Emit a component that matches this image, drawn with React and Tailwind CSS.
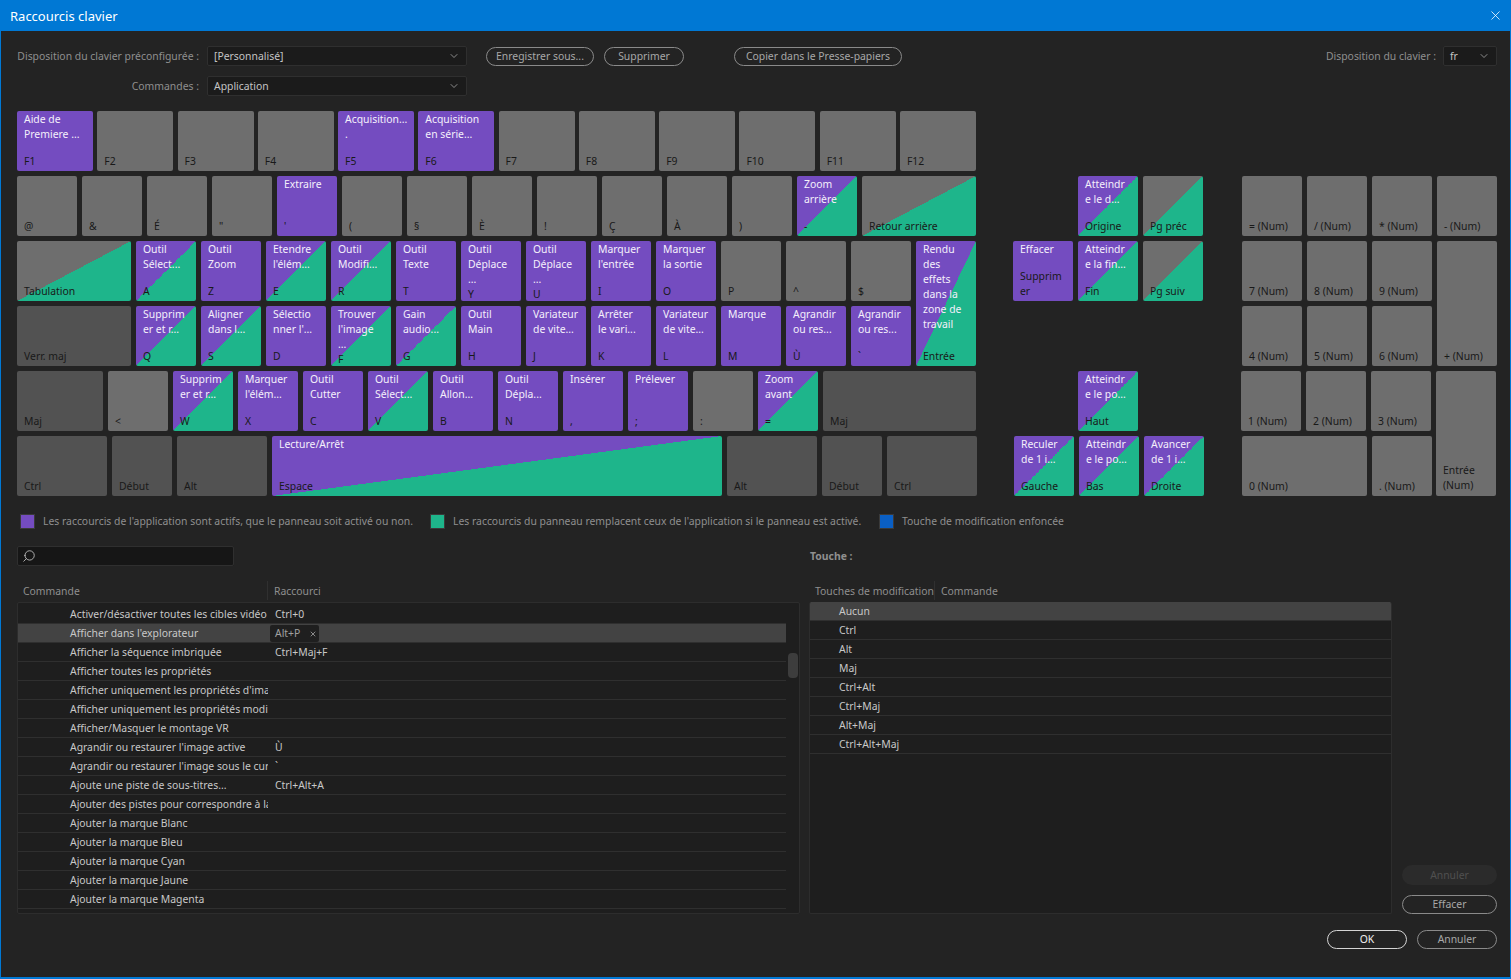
import React from 'react';
import { ChevronDown, Search, X } from 'lucide-react';

const PURPLE = 'bg-[#744cc0]';
const MIX = 'bg-[linear-gradient(to_bottom_right,#744cc0_50%,#1eb58b_50%)]';
const GRAY = 'bg-[#6e6e6e]';
const GRAYMIX = 'bg-[linear-gradient(to_bottom_right,#6e6e6e_50%,#1eb58b_50%)]';
const DARK = 'bg-[#525252]';

const Key = ({ top, label, color = GRAY, className = 'w-[60px] h-[60px]', labelClass = '' }) => (
  <div className={`${className} ${color} shrink-0 rounded-[2px] px-[7px] pt-px pb-[2px] flex flex-col justify-between overflow-hidden`}>
    <div className="text-[#f4f0fb] whitespace-pre-line">{top}</div>
    <div className={`${labelClass} text-[#191919] whitespace-pre-line`}>{label}</div>
  </div>
);

const Row = ({ children, className = 'gap-[5px]' }) => <div className={`flex ${className}`}>{children}</div>;

const Combo = ({ text, className }) => (
  <div className={`${className} h-5 bg-[#1b1b1b] border border-[#2f2f2f] rounded-[2px] pl-[6px] pr-[6px] flex items-center justify-between text-[#c4c4c4]`}>
    <span>{text}</span>
    <ChevronDown size={12} strokeWidth={1.5} className="text-[#b0b0b0]" />
  </div>
);

const Pill = ({ children, className, muted }) => (
  <div className={`${className} h-[19px] rounded-full border flex items-center justify-center ${muted ? 'border-[#8a8a8a] text-[#a8a8a8]' : 'border-[#d4d4d4] text-[#f0f0f0]'}`}>
    <span>{children}</span>
  </div>
);

const commands = [
  ['Activer/désactiver toutes les cibles vidéo', 'Ctrl+0'],
  ["Afficher dans l'explorateur", 'Alt+P'],
  ['Afficher la séquence imbriquée', 'Ctrl+Maj+F'],
  ['Afficher toutes les propriétés', ''],
  ["Afficher uniquement les propriétés d'image", ''],
  ['Afficher uniquement les propriétés modifiées', ''],
  ['Afficher/Masquer le montage VR', ''],
  ["Agrandir ou restaurer l'image active", 'Ù'],
  ["Agrandir ou restaurer l'image sous le curseur", '`'],
  ['Ajoute une piste de sous-titres...', 'Ctrl+Alt+A'],
  ['Ajouter des pistes pour correspondre à la source', ''],
  ['Ajouter la marque Blanc', ''],
  ['Ajouter la marque Bleu', ''],
  ['Ajouter la marque Cyan', ''],
  ['Ajouter la marque Jaune', ''],
  ['Ajouter la marque Magenta', ''],
  ['Ajouter la marque Orange', ''],
];

const modifiers = ['Aucun', 'Ctrl', 'Alt', 'Maj', 'Ctrl+Alt', 'Ctrl+Maj', 'Alt+Maj', 'Ctrl+Alt+Maj'];

const MainKeys = () => (
  <div className="w-[960px] shrink-0 flex flex-col gap-[5px]">
    <Row className="w-[959px] justify-between">
      <Key className="w-[76px] h-[60px]" color={PURPLE} top={'Aide de\nPremiere ...'} label="F1" />
      <Key className="w-[76px] h-[60px]" label="F2" />
      <Key className="w-[76px] h-[60px]" label="F3" />
      <Key className="w-[76px] h-[60px]" label="F4" />
      <Key className="w-[76px] h-[60px]" color={PURPLE} top={'Acquisition...\n.'} label="F5" />
      <Key className="w-[76px] h-[60px]" color={PURPLE} top={'Acquisition\nen série...'} label="F6" />
      <Key className="w-[76px] h-[60px]" label="F7" />
      <Key className="w-[76px] h-[60px]" label="F8" />
      <Key className="w-[76px] h-[60px]" label="F9" />
      <Key className="w-[76px] h-[60px]" label="F10" />
      <Key className="w-[76px] h-[60px]" label="F11" />
      <Key className="w-[76px] h-[60px]" label="F12" />
    </Row>
    <Row>
      <Key label="@" />
      <Key label="&" />
      <Key label="É" />
      <Key label={'"'} />
      <Key color={PURPLE} top="Extraire" label="'" />
      <Key label="(" />
      <Key label="§" />
      <Key label="È" />
      <Key label="!" />
      <Key label="Ç" />
      <Key label="À" />
      <Key label=")" />
      <Key color={MIX} top={'Zoom\narrière'} label="-" />
      <Key className="w-[114px] h-[60px]" color={GRAYMIX} label="Retour arrière" />
    </Row>
    <Row>
      <div className="flex flex-col gap-[5px]">
        <Row>
          <Key className="w-[114px] h-[60px]" color={GRAYMIX} label="Tabulation" />
          <Key color={MIX} top={'Outil\nSélect...'} label="A" />
          <Key color={PURPLE} top={'Outil\nZoom'} label="Z" />
          <Key color={MIX} top={"Etendre\nl'élém..."} label="E" />
          <Key color={MIX} top={'Outil\nModifi...'} label="R" />
          <Key color={PURPLE} top={'Outil\nTexte'} label="T" />
          <Key color={PURPLE} top={'Outil\nDéplace\n...'} label="Y" />
          <Key color={PURPLE} top={'Outil\nDéplace\n...'} label="U" />
          <Key color={PURPLE} top={"Marquer\nl'entrée"} label="I" />
          <Key color={PURPLE} top={'Marquer\nla sortie'} label="O" />
          <Key label="P" />
          <Key label="^" />
          <Key label="$" />
        </Row>
        <Row>
          <Key className="w-[114px] h-[60px]" color={DARK} label="Verr. maj" />
          <Key color={MIX} top={'Supprim\ner et r...'} label="Q" />
          <Key color={MIX} top={'Aligner\ndans l...'} label="S" />
          <Key color={PURPLE} top={"Sélectio\nnner l'..."} label="D" />
          <Key color={MIX} top={"Trouver\nl'image\n..."} label="F" />
          <Key color={MIX} top={'Gain\naudio...'} label="G" />
          <Key color={PURPLE} top={'Outil\nMain'} label="H" />
          <Key color={PURPLE} top={'Variateur\nde vite...'} label="J" />
          <Key color={PURPLE} top={'Arrêter\nle vari...'} label="K" />
          <Key color={PURPLE} top={'Variateur\nde vite...'} label="L" />
          <Key color={PURPLE} top="Marque" label="M" />
          <Key color={PURPLE} top={'Agrandir\nou res...'} label="Ù" />
          <Key color={PURPLE} top={'Agrandir\nou res...'} label="`" />
        </Row>
      </div>
      <Key className="w-[60px] h-[125px]" color={MIX} top={'Rendu\ndes\neffets\ndans la\nzone de\ntravail'} label="Entrée" />
    </Row>
    <Row>
      <Key className="w-[86px] h-[60px]" color={DARK} label="Maj" />
      <Key label="<" />
      <Key color={MIX} top={'Supprim\ner et r...'} label="W" />
      <Key color={PURPLE} top={"Marquer\nl'élém..."} label="X" />
      <Key color={PURPLE} top={'Outil\nCutter'} label="C" />
      <Key color={MIX} top={'Outil\nSélect...'} label="V" />
      <Key color={PURPLE} top={'Outil\nAllon...'} label="B" />
      <Key color={PURPLE} top={'Outil\nDépla...'} label="N" />
      <Key color={PURPLE} top="Insérer" label="," />
      <Key color={PURPLE} top="Prélever" label=";" />
      <Key label=":" />
      <Key color={MIX} top={'Zoom\navant'} label="=" />
      <Key className="w-[153px] h-[60px]" color={DARK} label="Maj" />
    </Row>
    <Row>
      <Key className="w-[90px] h-[60px]" color={DARK} label="Ctrl" />
      <Key color={DARK} label="Début" />
      <Key className="w-[90px] h-[60px]" color={DARK} label="Alt" />
      <Key className="w-[450px] h-[60px]" color={MIX} top="Lecture/Arrêt" label="Espace" />
      <Key className="w-[90px] h-[60px]" color={DARK} label="Alt" />
      <Key color={DARK} label="Début" />
      <Key className="w-[90px] h-[60px]" color={DARK} label="Ctrl" />
    </Row>
  </div>
);

const NavKeys = () => (
  <div className="ml-[36px] w-[191px] shrink-0 grid grid-cols-[60px_60px_60px] grid-rows-[60px_60px_60px_60px_60px_60px] gap-[5px]">
    <div className="col-start-2 row-start-2"><Key color={MIX} top={'Atteindr\ne le d...'} label="Origine" /></div>
    <div className="col-start-3 row-start-2"><Key color={GRAYMIX} label="Pg préc" /></div>
    <div className="col-start-1 row-start-3"><Key color={PURPLE} top="Effacer" label={'Supprim\ner'} /></div>
    <div className="col-start-2 row-start-3"><Key color={MIX} top={'Atteindr\ne la fin...'} label="Fin" /></div>
    <div className="col-start-3 row-start-3"><Key color={GRAYMIX} label="Pg suiv" /></div>
    <div className="col-start-2 row-start-5"><Key color={MIX} top={'Atteindr\ne le po...'} label="Haut" /></div>
    <div className="col-start-1 row-start-6 ml-px"><Key color={MIX} top={'Reculer\nde 1 i...'} label="Gauche" /></div>
    <div className="col-start-2 row-start-6 ml-px"><Key color={MIX} top={'Atteindr\ne le po...'} label="Bas" /></div>
    <div className="col-start-3 row-start-6 ml-px"><Key color={MIX} top={'Avancer\nde 1 i...'} label="Droite" /></div>
  </div>
);

const NumKeys = () => (
  <div className="ml-[38px] shrink-0 grid grid-cols-[60px_60px_60px_60px] grid-rows-[60px_60px_60px_60px_60px_60px] gap-[5px]">
    <div className="row-start-2 col-start-1"><Key label="= (Num)" /></div>
    <div className="row-start-2 col-start-2"><Key label="/ (Num)" /></div>
    <div className="row-start-2 col-start-3"><Key label="* (Num)" /></div>
    <div className="row-start-2 col-start-4"><Key label="- (Num)" /></div>
    <div className="row-start-3 col-start-1"><Key label="7 (Num)" /></div>
    <div className="row-start-3 col-start-2"><Key label="8 (Num)" /></div>
    <div className="row-start-3 col-start-3"><Key label="9 (Num)" /></div>
    <div className="row-start-3 col-start-4 row-span-2"><Key className="w-[60px] h-[125px]" label="+ (Num)" /></div>
    <div className="row-start-4 col-start-1"><Key label="4 (Num)" /></div>
    <div className="row-start-4 col-start-2"><Key label="5 (Num)" /></div>
    <div className="row-start-4 col-start-3"><Key label="6 (Num)" /></div>
    <div className="row-start-5 col-start-1 -ml-px"><Key label="1 (Num)" /></div>
    <div className="row-start-5 col-start-2 -ml-px"><Key label="2 (Num)" /></div>
    <div className="row-start-5 col-start-3 -ml-px"><Key label="3 (Num)" /></div>
    <div className="row-start-5 col-start-4 row-span-2 -ml-px"><Key className="w-[60px] h-[125px]" labelClass="mb-px" top="" label={'Entrée\n(Num)'} /></div>
    <div className="row-start-6 col-start-1 col-span-2"><Key className="w-[125px] h-[60px]" label="0 (Num)" /></div>
    <div className="row-start-6 col-start-3"><Key label=". (Num)" /></div>
  </div>
);

const Legend = ({ color, className, children }) => (
  <div className={`${className} flex items-center gap-2 text-[#8f8f8f]`}>
    <div className={`w-[15px] h-[15px] ${color} border border-[#3a3a3a]`} />
    <span>{children}</span>
  </div>
);

export default function App() {
  return (
    <div className="w-[1511px] h-[979px] overflow-hidden bg-[#0078d4] font-['Noto_Sans',sans-serif] text-[10.4px] leading-[15px]">
      <div className="h-[31px] pl-[10px] pr-2 flex items-center justify-between text-white text-[13px] rounded-t-md">
        <span className="mt-px">Raccourcis clavier</span>
        <X size={15} strokeWidth={1.25} />
      </div>
      <div className="mx-px h-[946px] bg-[#232323] pl-4 pr-[13px] pt-[15px] flex flex-col">
        {/* presets */}
        <div className="flex items-center h-5 text-[#8f8f8f]">
          <div className="w-[182px] text-right whitespace-nowrap">Disposition du clavier préconfigurée :</div>
          <Combo text="[Personnalisé]" className="ml-2 w-[260px]" />
          <Pill muted className="ml-[19px] w-[108px]">Enregistrer sous...</Pill>
          <Pill muted className="ml-[10px] w-[80px]">Supprimer</Pill>
          <Pill muted className="ml-[50px] w-[168px]">Copier dans le Presse-papiers</Pill>
          <div className="ml-auto">Disposition du clavier :</div>
          <Combo text="fr" className="ml-[7px] w-[54px]" />
        </div>
        <div className="mt-[10px] flex items-center h-5 text-[#8f8f8f]">
          <div className="w-[182px] text-right">Commandes :</div>
          <Combo text="Application" className="ml-2 w-[260px]" />
        </div>

        <div className="mt-[15px] flex">
          <MainKeys />
          <NavKeys />
          <NumKeys />
        </div>

        <div className="mt-[18px] flex h-[15px]">
          <Legend color="bg-[#744cc0]" className="ml-[3px] w-[410px]">Les raccourcis de l'application sont actifs, que le panneau soit activé ou non.</Legend>
          <Legend color="bg-[#1eb58b]" className="w-[449px]">Les raccourcis du panneau remplacent ceux de l'application si le panneau est activé.</Legend>
          <Legend color="bg-[#0a5fc4]">Touche de modification enfoncée</Legend>
        </div>

        <div className="mt-[17px] flex h-5">
          <div className="w-[217px] bg-[#161616] border border-[#2f2f2f] rounded-[2px] pl-1 flex items-center">
            <Search size={14} strokeWidth={1.5} className="-scale-x-100 text-[#c0c0c0]" />
          </div>
          <div className="ml-[576px] font-bold text-[#8f8f8f] flex items-center">Touche :</div>
        </div>

        <div className="mt-[15px] flex h-[333px]">
          <div className="w-[783px] shrink-0 flex flex-col">
            <div className="h-[19px] flex items-center text-[#8f8f8f]">
              <div className="w-[251px] pl-[6px] pt-px border-r border-[#303030] h-full flex items-center">Commande</div>
              <div className="pl-[6px] pt-px">Raccourci</div>
            </div>
            <div className="mt-[2px] flex-1 overflow-hidden bg-[#1e1e1e] border border-[#2d2d2d] rounded-[2px] pt-[2px] relative">
              {commands.map(([name, shortcut], i) => (
                <div key={name} className={`w-[768px] h-[19px] flex items-center border-b border-[#2f2f2f] ${i === 1 ? 'bg-[#434343]' : ''}`}>
                  <div className="w-[250px] shrink-0 overflow-hidden whitespace-nowrap pl-[52px] text-[#c8c8c8]">{name}</div>
                  {i === 1 ? (
                    <div className="ml-[2px] w-[49px] h-[17px] bg-[#1f1f1f] rounded-[2px] pl-[5px] pr-[2px] flex items-center justify-between text-[#a0a0a0]">
                      <span>{shortcut}</span>
                      <X size={8} strokeWidth={2} className="text-[#c0c0c0] mt-px" />
                    </div>
                  ) : (
                    <div className="pl-[7px] text-[#c8c8c8]">{shortcut}</div>
                  )}
                </div>
              ))}
              <div className="absolute right-[1px] top-[50px] w-[10px] h-[25px] rounded-[4px] bg-[#3d3d3d]" />
            </div>
          </div>

          <div className="ml-[9px] w-[583px] shrink-0 flex flex-col">
            <div className="h-[19px] flex items-center text-[#8f8f8f]">
              <div className="w-[126px] pl-[6px] pt-px border-r border-[#303030] h-full flex items-center whitespace-nowrap">Touches de modification</div>
              <div className="pl-[6px] pt-px">Commande</div>
            </div>
            <div className="mt-[2px] flex-1 overflow-hidden bg-[#1e1e1e] border border-t-0 border-[#2d2d2d] rounded-[2px]">
              {modifiers.map((m, i) => (
                <div key={m} className={`h-[19px] flex items-center border-b border-[#2f2f2f] pl-[29px] text-[#c8c8c8] ${i === 0 ? 'bg-[#434343]' : ''}`}>
                  <span>{m}</span>
                </div>
              ))}
            </div>
          </div>

          <div className="ml-[10px] flex-1 flex flex-col justify-end gap-[10px]">
            <div className="h-5 rounded-full bg-[#2b2b2b] text-[#505050] flex items-center justify-center">Annuler</div>
            <Pill muted className="">Effacer</Pill>
          </div>
        </div>

        <div className="mt-[16px] flex justify-end gap-[10px]">
          <Pill className="w-[80px]">OK</Pill>
          <Pill muted className="w-[80px]">Annuler</Pill>
        </div>
      </div>
    </div>
  );
}
